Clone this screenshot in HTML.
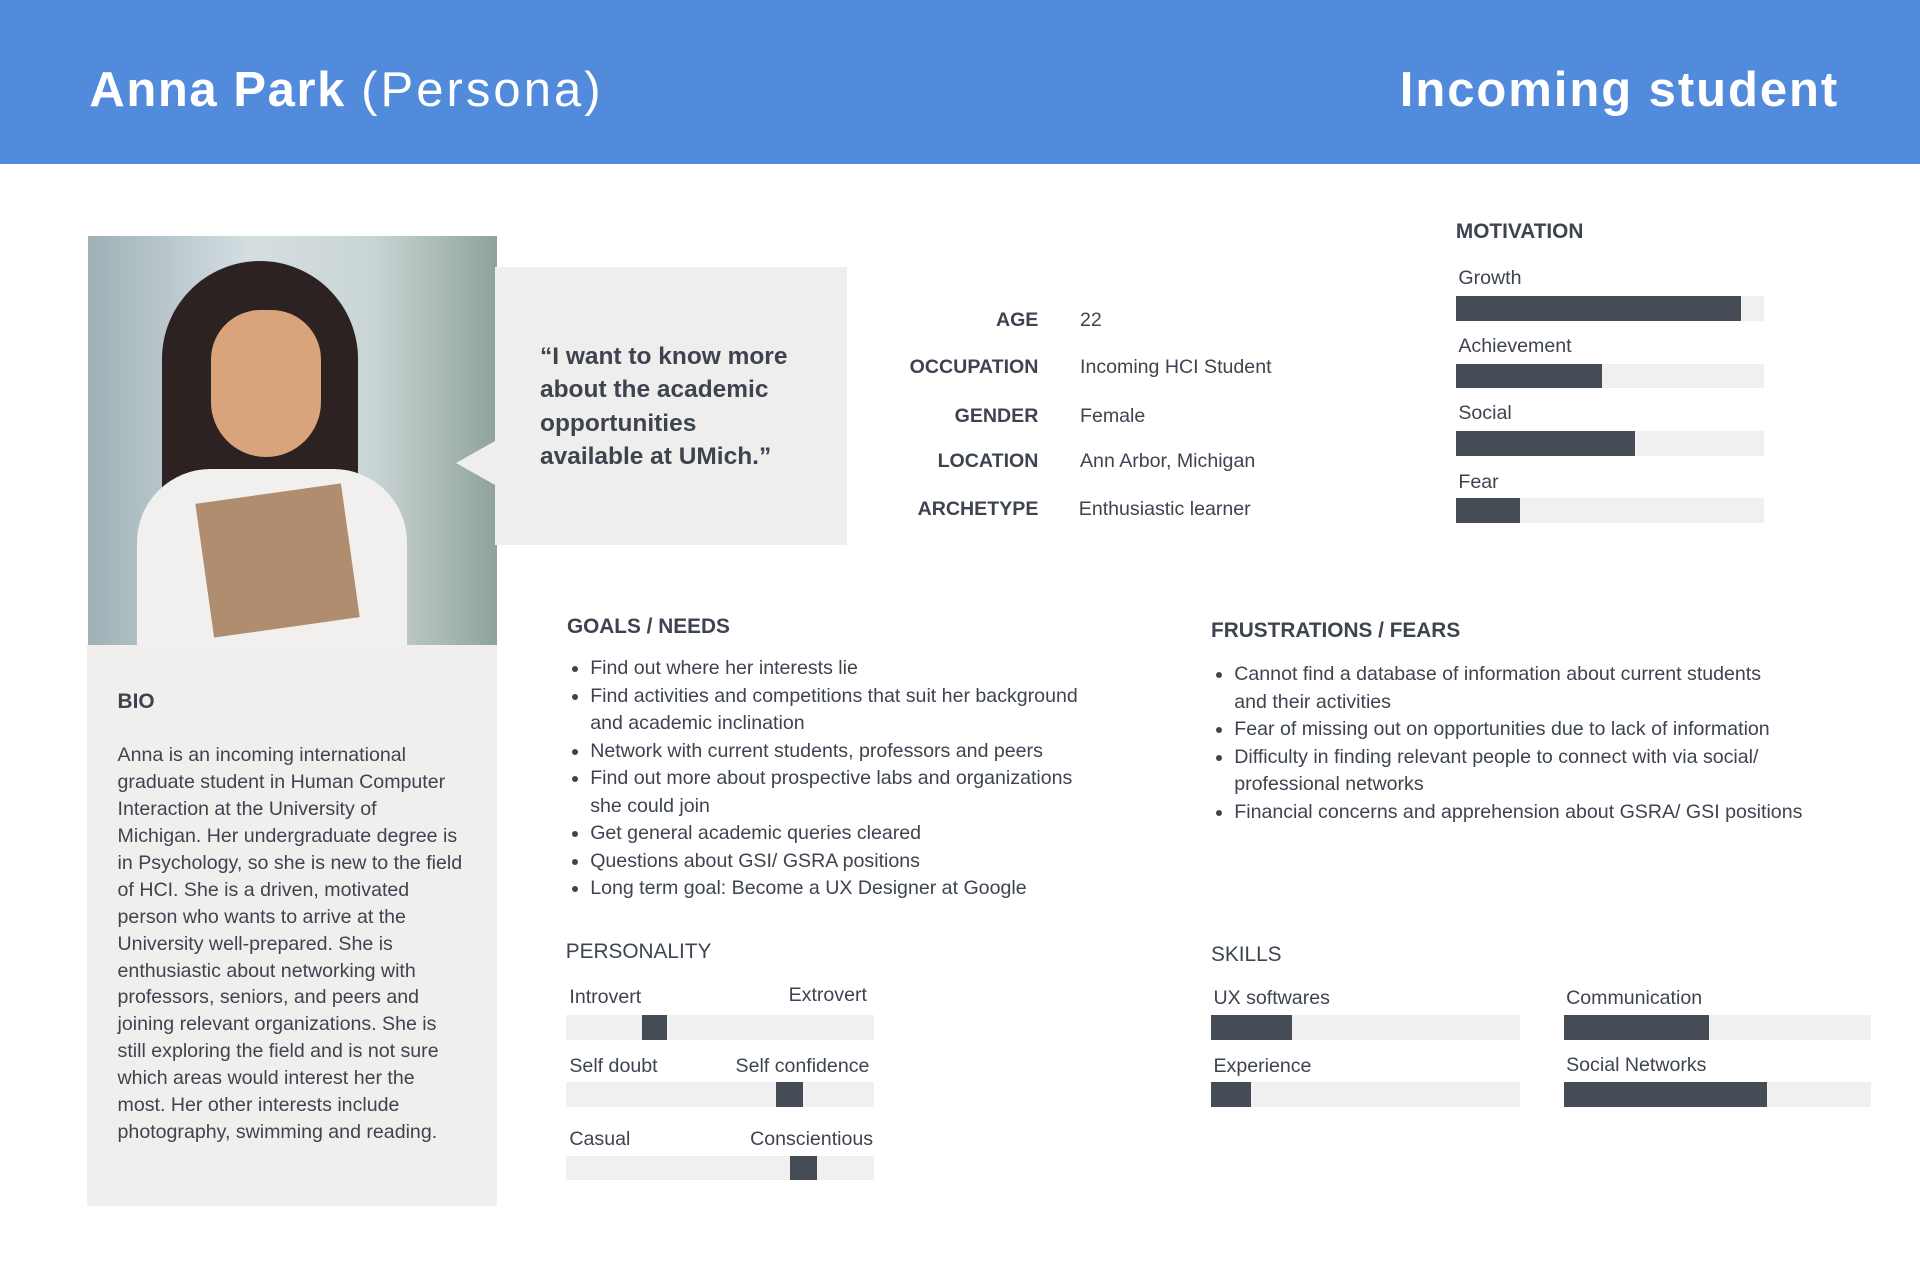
<!DOCTYPE html>
<html><head><meta charset="utf-8"><style>
html,body{margin:0;padding:0;background:#fff;overflow:hidden}
#w{position:relative;width:1568px;height:1045px;zoom:1.22449;font-family:"Liberation Sans",sans-serif;color:#3d4450}
.a{position:absolute}
.hdr{left:0;top:0;width:1568px;height:134px;background:#528bdb}
.h1{color:#fff;font-size:40px;white-space:nowrap;line-height:1;letter-spacing:1.3px}
.t{font-size:16px;white-space:nowrap;line-height:1}
.b{font-weight:bold}
.bar{position:absolute;height:20px;background:#f0f0f0}
.bar i{position:absolute;top:0;height:20px;background:#454c55}
ul{margin:0;padding:0 0 0 19px;font-size:16px;line-height:22.5px}
li{padding-left:0}
</style></head><body><div id="w">
<div class="a hdr"></div>
<div class="a h1" style="left:73px;top:54px"><b>Anna Park</b> <span style="font-weight:300;letter-spacing:2.5px">(Persona)</span></div>
<div class="a h1 b" style="right:66px;top:54px;letter-spacing:1.6px">Incoming student</div>

<div class="a" style="left:72px;top:193px;width:334px;height:334px;background:linear-gradient(90deg,#9fb0b6,#d5dfe2 40%,#c9d4d4 70%,#8fa39a);overflow:hidden">
<div class="a" style="left:60px;top:20px;width:160px;height:300px;border-radius:80px 80px 30px 30px;background:#2b2221"></div>
<div class="a" style="left:100px;top:60px;width:90px;height:120px;border-radius:45px 45px 50px 50px;background:#d9a37c"></div>
<div class="a" style="left:40px;top:190px;width:220px;height:150px;border-radius:60px 60px 0 0;background:#f2f0ee"></div>
<div class="a" style="left:95px;top:210px;width:120px;height:110px;background:#b08d6f;transform:rotate(-8deg)"></div>
</div>
<div class="a" style="left:71px;top:527px;width:335px;height:458px;background:#f0efee"></div>
<div class="a t b" style="left:96px;top:565px;font-size:17px">BIO</div>
<div class="a" style="left:96px;top:606px;width:283px;font-size:16px;line-height:22px">Anna is an incoming international graduate student in Human Computer Interaction at the University of Michigan. Her undergraduate degree is in Psychology, so she is new to the field of HCI. She is a driven, motivated person who wants to arrive at the University well-prepared. She is enthusiastic about networking with professors, seniors, and peers and joining relevant organizations. She is still exploring the field and is not sure which areas would interest her the most. Her other interests include photography, swimming and reading.</div>

<div class="a" style="left:404px;top:218px;width:288px;height:227px;background:#efeeed"></div>
<div class="a" style="left:372px;top:360px;width:0;height:0;border-top:18px solid transparent;border-bottom:18px solid transparent;border-right:32px solid #efeeed"></div>
<div class="a b" style="left:441px;top:278px;font-size:20px;line-height:27px;width:210px">“I want to know more about the academic opportunities available at UMich.”</div>

<div class="a t b" style="right:720px;top:254px">AGE</div><div class="a t" style="left:882px;top:254px">22</div>
<div class="a t b" style="right:720px;top:292px">OCCUPATION</div><div class="a t" style="left:882px;top:292px">Incoming HCI Student</div>
<div class="a t b" style="right:720px;top:332px">GENDER</div><div class="a t" style="left:882px;top:332px">Female</div>
<div class="a t b" style="right:720px;top:369px">LOCATION</div><div class="a t" style="left:882px;top:369px">Ann Arbor, Michigan</div>
<div class="a t b" style="right:720px;top:408px">ARCHETYPE</div><div class="a t" style="left:881px;top:408px">Enthusiastic learner</div>

<div class="a t b" style="left:1189px;top:181px;font-size:17px">MOTIVATION</div>
<div class="a t" style="left:1191px;top:220px">Growth</div><div class="bar" style="left:1189px;top:242px;width:252px"><i style="left:0;width:233px"></i></div>
<div class="a t" style="left:1191px;top:275px">Achievement</div><div class="bar" style="left:1189px;top:297px;width:252px"><i style="left:0;width:119px"></i></div>
<div class="a t" style="left:1191px;top:330px">Social</div><div class="bar" style="left:1189px;top:352px;width:252px"><i style="left:0;width:146px"></i></div>
<div class="a t" style="left:1191px;top:386px">Fear</div><div class="bar" style="left:1189px;top:407px;width:252px"><i style="left:0;width:52px"></i></div>

<div class="a t b" style="left:463px;top:504px;font-size:17px">GOALS / NEEDS</div>
<ul class="a" style="left:463px;top:535px;width:420px">
<li>Find out where her interests lie</li>
<li>Find activities and competitions that suit her background and academic inclination</li>
<li>Network with current students, professors and peers</li>
<li>Find out more about prospective labs and organizations she could join</li>
<li>Get general academic queries cleared</li>
<li>Questions about GSI/ GSRA positions</li>
<li>Long term goal: Become a UX Designer at Google</li>
</ul>
<div class="a t b" style="left:989px;top:507px;font-size:17px">FRUSTRATIONS / FEARS</div>
<ul class="a" style="left:989px;top:540px;width:520px">
<li>Cannot find a database of information about current students<br>and their activities</li>
<li>Fear of missing out on opportunities due to lack of information</li>
<li>Difficulty in finding relevant people to connect with via social/<br>professional networks</li>
<li>Financial concerns and apprehension about GSRA/ GSI positions</li>
</ul>

<div class="a t" style="left:462px;top:769px;font-size:17px">PERSONALITY</div>
<div class="a t" style="left:465px;top:807px">Introvert</div><div class="a t" style="right:860px;top:805px">Extrovert</div>
<div class="bar" style="left:462px;top:829px;width:252px"><i style="left:62px;width:21px"></i></div>
<div class="a t" style="left:465px;top:863px">Self doubt</div><div class="a t" style="right:858px;top:863px">Self confidence</div>
<div class="bar" style="left:462px;top:884px;width:252px"><i style="left:172px;width:22px"></i></div>
<div class="a t" style="left:465px;top:923px">Casual</div><div class="a t" style="right:855px;top:923px">Conscientious</div>
<div class="bar" style="left:462px;top:944px;width:252px"><i style="left:183px;width:22px"></i></div>

<div class="a t" style="left:989px;top:772px;font-size:17px">SKILLS</div>
<div class="a t" style="left:991px;top:808px">UX softwares</div><div class="bar" style="left:989px;top:829px;width:252px"><i style="left:0;width:66px"></i></div>
<div class="a t" style="left:1279px;top:808px">Communication</div><div class="bar" style="left:1277px;top:829px;width:251px"><i style="left:0;width:119px"></i></div>
<div class="a t" style="left:991px;top:863px">Experience</div><div class="bar" style="left:989px;top:884px;width:252px"><i style="left:0;width:33px"></i></div>
<div class="a t" style="left:1279px;top:862px">Social Networks</div><div class="bar" style="left:1277px;top:884px;width:251px"><i style="left:0;width:166px"></i></div>
</div></body></html>
